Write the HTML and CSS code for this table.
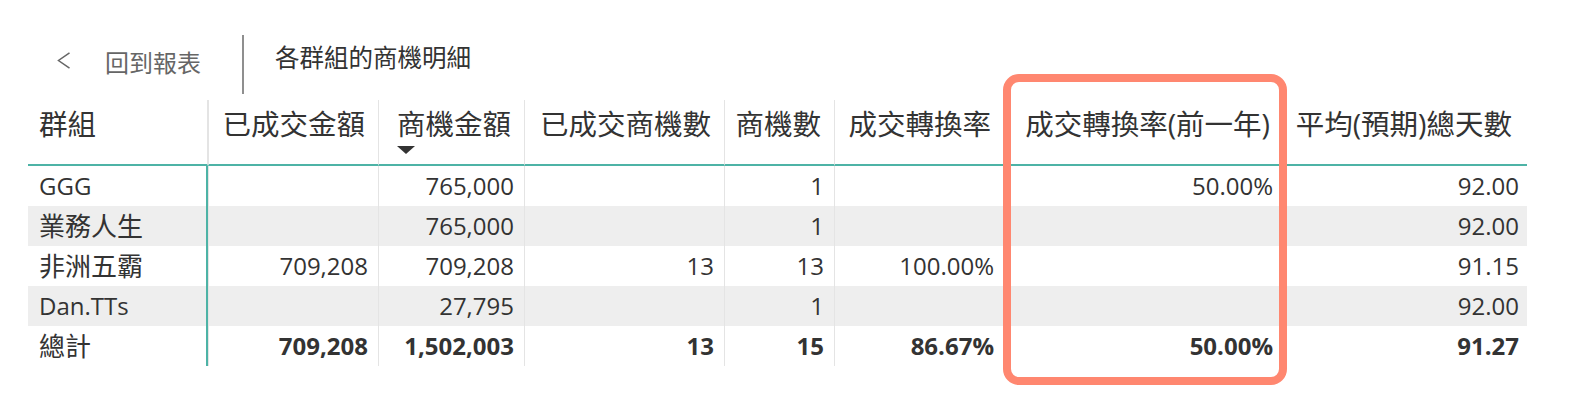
FILE: index.html
```html
<!DOCTYPE html>
<html lang="zh-Hant">
<head>
<meta charset="utf-8">
<title>各群組的商機明細</title>
<link rel="stylesheet" href="styles.css">
</head>
<body>
<div class="topbar">
  <svg class="chev" width="14" height="17" viewBox="0 0 14 17"><polyline points="12.5,0.8 1.5,8.5 12.5,16.2" fill="none" stroke="#666" stroke-width="1.5"/></svg>
  <span class="back">回到報表</span>
  <div class="vsep"></div>
  <span class="title">各群組的商機明細</span>
</div>
<div class="tablewrap">
  <div class="row head">
    <div class="c c1">群組</div>
    <div class="c">已成交金額</div>
    <div class="c"><span class="sorted">商機金額<i class="arrow"></i></span></div>
    <div class="c">已成交商機數</div>
    <div class="c">商機數</div>
    <div class="c">成交轉換率</div>
    <div class="c">成交轉換率(前一年)</div>
    <div class="c c8">平均(預期)總天數</div>
  </div>
  <div class="row">
    <div class="c c1">GGG</div>
    <div class="c"></div>
    <div class="c">765,000</div>
    <div class="c"></div>
    <div class="c">1</div>
    <div class="c"></div>
    <div class="c">50.00%</div>
    <div class="c c8">92.00</div>
  </div>
  <div class="row alt">
    <div class="c c1"><span class="cjk">業務人生</span></div>
    <div class="c"></div>
    <div class="c">765,000</div>
    <div class="c"></div>
    <div class="c">1</div>
    <div class="c"></div>
    <div class="c"></div>
    <div class="c c8">92.00</div>
  </div>
  <div class="row">
    <div class="c c1"><span class="cjk">非洲五霸</span></div>
    <div class="c">709,208</div>
    <div class="c">709,208</div>
    <div class="c">13</div>
    <div class="c">13</div>
    <div class="c">100.00%</div>
    <div class="c"></div>
    <div class="c c8">91.15</div>
  </div>
  <div class="row alt">
    <div class="c c1">Dan.TTs</div>
    <div class="c"></div>
    <div class="c">27,795</div>
    <div class="c"></div>
    <div class="c">1</div>
    <div class="c"></div>
    <div class="c"></div>
    <div class="c c8">92.00</div>
  </div>
  <div class="row total">
    <div class="c c1"><span class="cjk">總計</span></div>
    <div class="c">709,208</div>
    <div class="c">1,502,003</div>
    <div class="c">13</div>
    <div class="c">15</div>
    <div class="c">86.67%</div>
    <div class="c">50.00%</div>
    <div class="c c8">91.27</div>
  </div>
  <div class="highlight"></div>
</div>
</body>
</html>
```

FILE: styles.css
```css
* { box-sizing: border-box; }

html, body { min-height: 410px; }

body {
  margin: 0;
  padding-top: 35px;
  padding-bottom: 40px;
  background: #ffffff;
  font-family: "Open Sans", "Noto Sans CJK TC", sans-serif;
  color: #333333;
}

.topbar {
  display: flex;
  align-items: flex-start;
  height: 59px;
  padding-left: 57px;
}

.chev {
  display: block;
  margin-top: 17px;
}

.back {
  margin-left: 34px;
  margin-top: 15px;
  font-size: 24px;
  line-height: 24px;
  color: #666666;
  font-family: "Noto Sans CJK TC", sans-serif;
}

.vsep {
  width: 2px;
  height: 59px;
  margin-left: 41px;
  background: #8f8f8f;
}

.title {
  margin-left: 31px;
  margin-top: 10px;
  font-size: 24.5px;
  line-height: 24px;
  color: #333333;
  font-family: "Noto Sans CJK TC", sans-serif;
}

.tablewrap {
  position: relative;
  margin-top: 6px;
  margin-left: 28px;
  width: 1499px;
  padding-bottom: 24px;
}

.row {
  display: grid;
  grid-template-columns: 180px 170px 146px 200px 110px 170px 279px 244px;
}

.c {
  height: 40px;
  line-height: 40px;
  font-size: 24px;
  padding: 0 10px;
  text-align: right;
  white-space: nowrap;
  border-left: 1px solid #e4e4e4;
}

.c.c1 {
  text-align: left;
  padding-left: 11px;
  border-left: none;
  border-right: 2px solid #4db3a6;
}

.c.c8 { padding-right: 8px; }

.cjk { font-size: 26px; }

.row.alt .c { background: #eeeeee; }

.row.total .c { font-weight: 700; }
.row.total .c.c1 { font-weight: 400; }

.row.head .c {
  height: 66px;
  padding-top: 7px;
  padding-right: 13px;
  line-height: 34px;
  font-size: 28.5px;
  border-bottom: 2px solid #4db3a6;
  color: #333333;
}

.row.head .c.c1 {
  padding-left: 11px;
  border-right: 1px solid #e4e4e4;
}

.row.head .c.c8 { padding-right: 15px; }

.sorted {
  display: inline-flex;
  flex-direction: column;
  align-items: flex-start;
  vertical-align: top;
}

.arrow {
  display: block;
  width: 0;
  height: 0;
  margin-top: 5px;
  border-left: 9px solid transparent;
  border-right: 9px solid transparent;
  border-top: 8px solid #333333;
}

.highlight {
  position: absolute;
  left: 975px;
  top: -26px;
  width: 284px;
  height: 311px;
  border: 8px solid #ff8770;
  border-radius: 16px;
  pointer-events: none;
}
```
